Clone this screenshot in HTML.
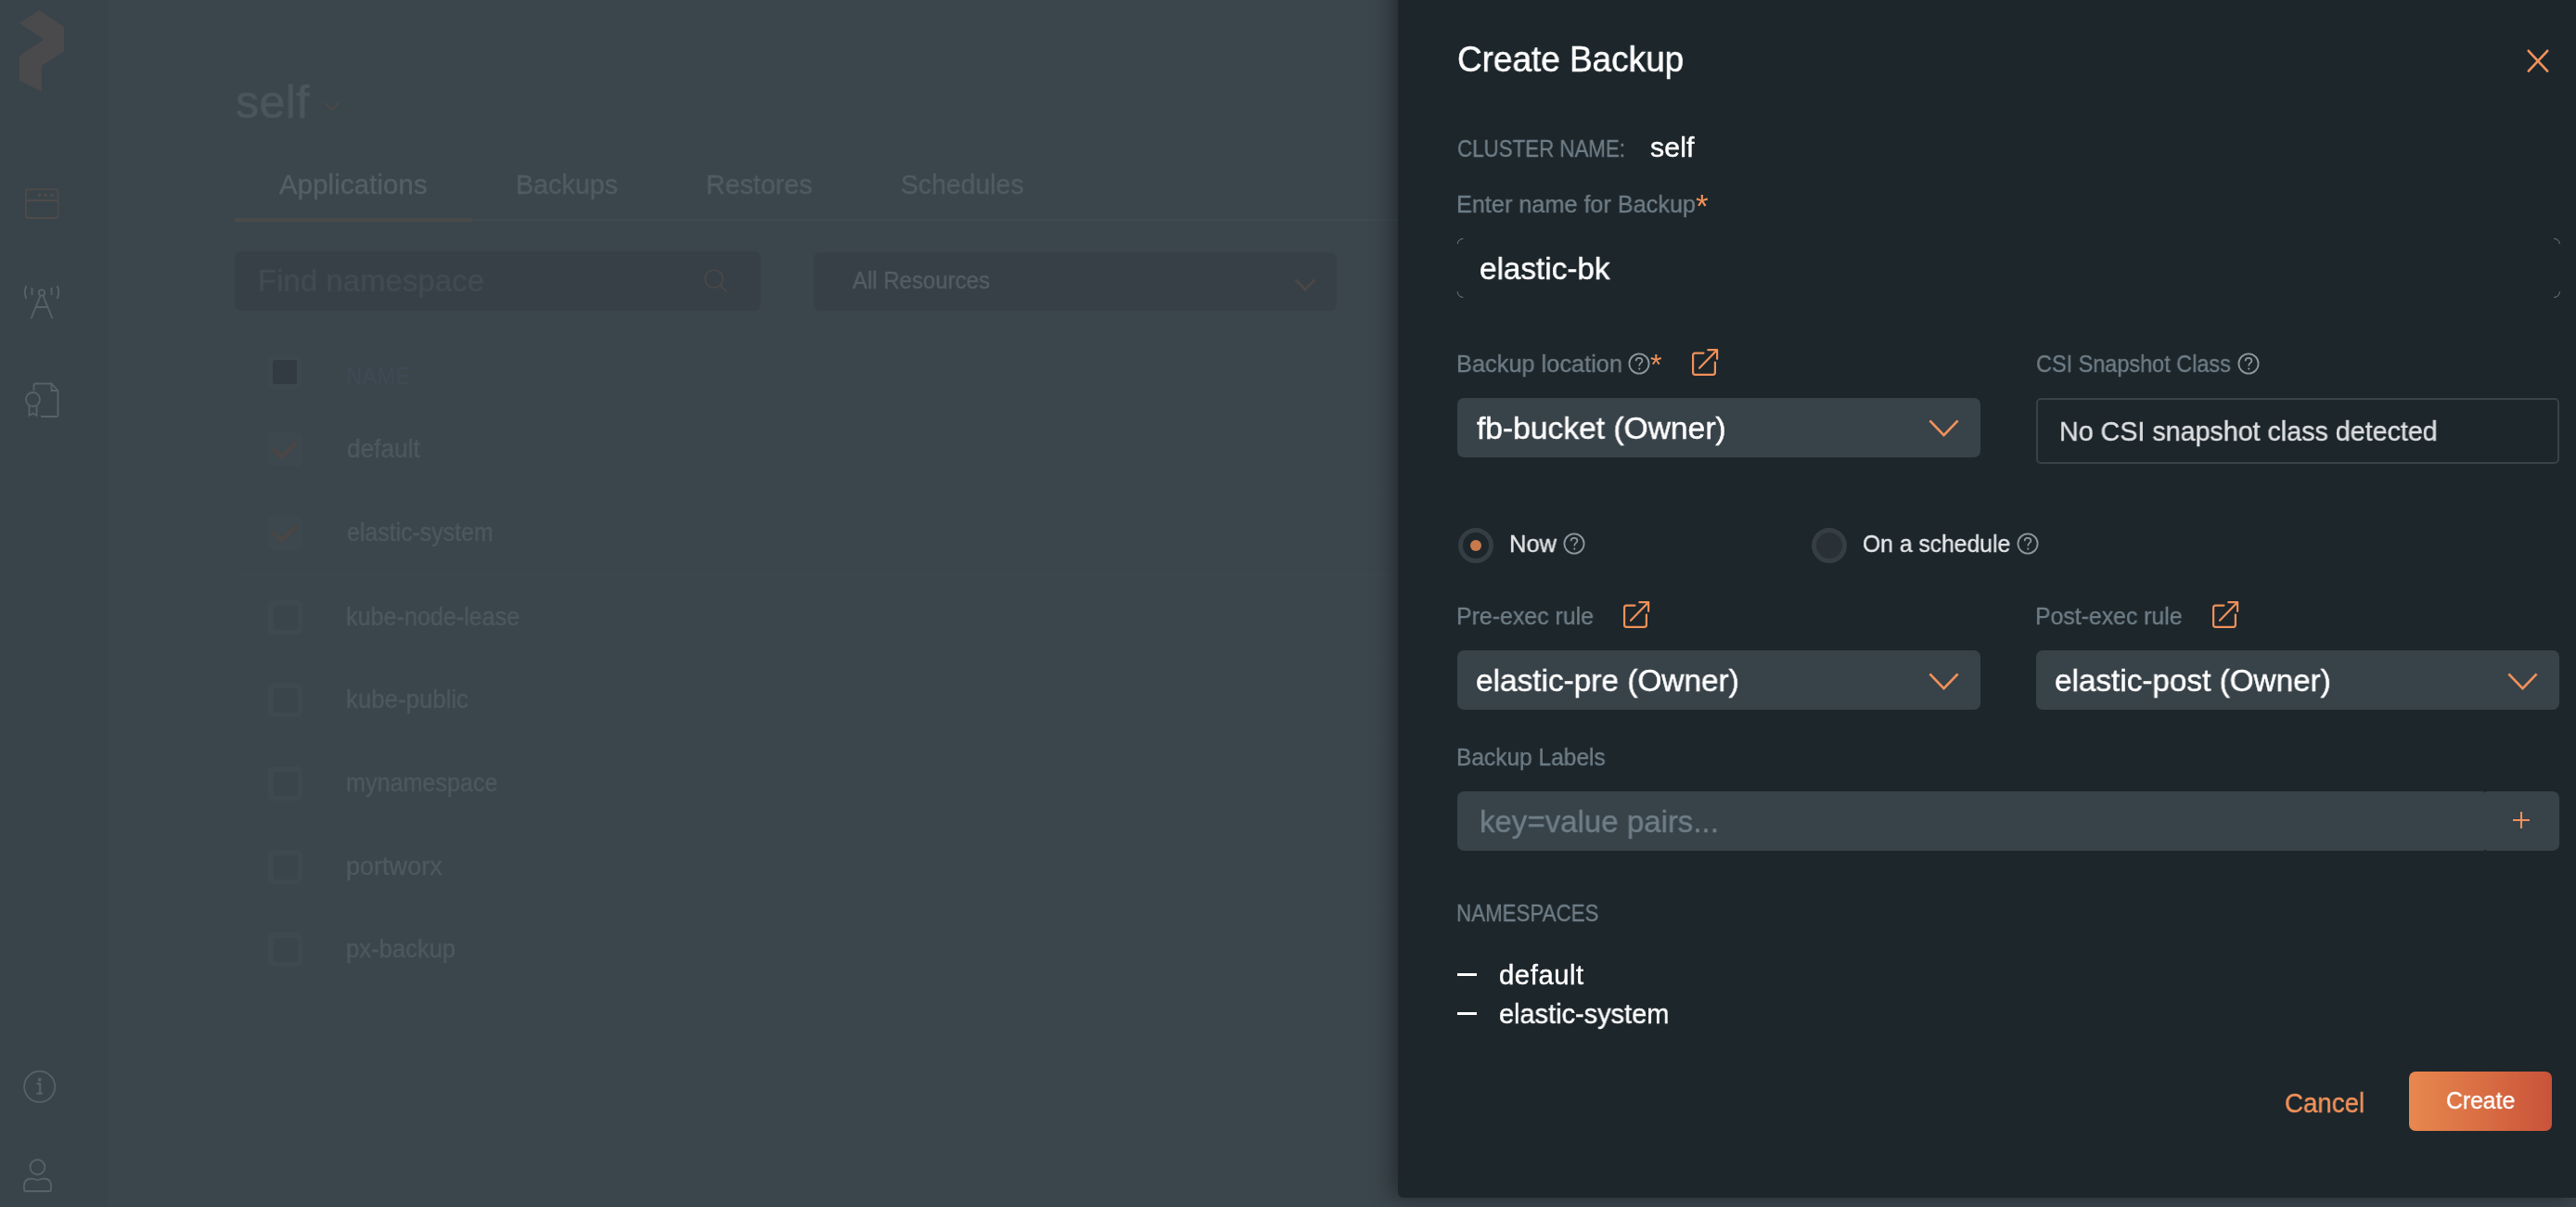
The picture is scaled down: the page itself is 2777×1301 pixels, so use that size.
<!DOCTYPE html>
<html><head><meta charset="utf-8"><style>
html,body{margin:0;padding:0;width:2777px;height:1301px;overflow:hidden;background:#3b464c;}
body{position:relative;font-family:"Liberation Sans", sans-serif;}
.a{position:absolute;box-sizing:content-box}
svg.a{overflow:visible}
.t{position:absolute;white-space:nowrap;line-height:0;will-change:transform;font-family:"Liberation Sans", sans-serif;}
.cb{width:37px;height:37px;background:#3e484f;border-radius:5px}
.cbf{width:37px;height:37px;background:#3d474e;border-radius:5px}
.cbi{width:26px;height:26px;background:#3a454b;border-radius:3px}
.dd{background:#384249;border-radius:7px}
</style></head><body>
<div class="a" style="left:0;top:0;width:117px;height:1301px;background:#39434a"></div>
<svg class="a" style="left:0;top:0" width="117" height="110" viewBox="0 0 117 110"><polygon points="42,11 69,29 69,55.5 44.7,71 44.7,98.5 21,87 21,60 47.4,42.5 21,25" fill="#4a4a4c"/></svg>
<svg class="a" style="left:20px;top:195px" width="50" height="50" viewBox="0 0 50 50"><rect x="7.8" y="9.2" width="34.8" height="30.8" rx="2.5" fill="none" stroke="#4e4a4a" stroke-width="1.8"/><line x1="7.8" y1="21" x2="42.6" y2="21" stroke="#4e4a4a" stroke-width="1.8"/><circle cx="22.5" cy="15.2" r="2" fill="#4e4a4a"/><circle cx="29.2" cy="15.2" r="2" fill="#4e4a4a"/><circle cx="36" cy="15.2" r="2" fill="#4e4a4a"/></svg>
<svg class="a" style="left:20px;top:300px" width="50" height="50" viewBox="0 0 50 50"><circle cx="25" cy="15.5" r="3.2" fill="none" stroke="#56626a" stroke-width="1.8"/><path d="M23.6 18.6 L13.5 43.5 M26.4 18.6 L36.5 43.5 M17.8 31 H32.2" fill="none" stroke="#56626a" stroke-width="1.8"/><path d="M8.5 8 Q5 15 8.5 22 M41.5 8 Q45 15 41.5 22" fill="none" stroke="#56626a" stroke-width="1.8"/><path d="M14.5 10 V18 M35.5 10 V18" fill="none" stroke="#56626a" stroke-width="1.8"/></svg>
<svg class="a" style="left:20px;top:405px" width="50" height="50" viewBox="0 0 50 50"><path d="M16.5 16 V10.5 Q16.5 8.5 18.5 8.5 H35.5 L42.5 16 V42.5 Q42.5 44 41 44 H24" fill="none" stroke="#56626a" stroke-width="1.8"/><path d="M35.5 8.5 V16 H42.5" fill="none" stroke="#56626a" stroke-width="1.8"/><circle cx="15.5" cy="25.5" r="7.5" fill="none" stroke="#56626a" stroke-width="1.8"/><path d="M11.5 32 V43 L15.5 40.5 L19.5 43 V32" fill="none" stroke="#56626a" stroke-width="1.8"/></svg>
<svg class="a" style="left:18px;top:1146px" width="50" height="50" viewBox="0 0 50 50"><circle cx="24.7" cy="25.3" r="16.6" fill="none" stroke="#56626a" stroke-width="1.7"/><circle cx="24.7" cy="17.7" r="2" fill="#56626a"/><path d="M21.7 22.2 H25.2 V32.3 M21.5 32.6 H28" fill="none" stroke="#56626a" stroke-width="2.2"/></svg>
<svg class="a" style="left:15px;top:1240px" width="50" height="50" viewBox="0 0 50 50"><circle cx="25.4" cy="18" r="8" fill="none" stroke="#56626a" stroke-width="1.8"/><path d="M11 42 V38 Q11 30.5 18.5 30.5 Q21 30.5 25.4 32 Q29.8 30.5 32.3 30.5 Q40 30.5 40 38 V42 Q40 44 38 44 H13 Q11 44 11 42 Z" fill="none" stroke="#56626a" stroke-width="1.8" stroke-linejoin="round"/></svg>
<svg class="a" style="left:346px;top:106.5px" width="23" height="15" viewBox="-3 -3 23 15"><path d="M0.8 0.8 L8.5 8.2 L16.2 0.8" fill="none" stroke="#4f4a48" stroke-width="1.6"/></svg>
<div class="a" style="left:253px;top:235px;width:256px;height:4px;background:#4a4a4b"></div>
<div class="a" style="left:509px;top:236px;width:1000px;height:2px;background:#3e4950"></div>
<div class="a" style="left:253px;top:271px;width:567px;height:64px;background:#374047;border-radius:7px"></div>
<svg class="a" style="left:755px;top:286px" width="32" height="32" viewBox="0 0 32 32"><circle cx="14.7" cy="14.7" r="9.5" fill="none" stroke="#4a4747" stroke-width="1.8"/><path d="M21.5 21.5 L28 28" stroke="#4a4747" stroke-width="1.8"/></svg>
<div class="a" style="left:877px;top:272px;width:564px;height:63px;background:#374047;border-radius:7px"></div>
<svg class="a" style="left:1392px;top:297px" width="30" height="19.5" viewBox="-3 -3 30 19.5"><path d="M1.5 1.5 L12.0 12.0 L22.5 1.5" fill="none" stroke="#4b4746" stroke-width="3"/></svg>
<div class="a" style="left:254px;top:440px;width:1260px;height:630px;border-left:2px solid #3b464c"></div>
<div class="a" style="left:256px;top:439px;width:1250px;height:2px;background:#3c474d"></div>
<div class="a" style="left:256px;top:529px;width:1250px;height:2px;background:#3c474d"></div>
<div class="a" style="left:256px;top:619px;width:1250px;height:2px;background:#3c474d"></div>
<div class="a" style="left:256px;top:709px;width:1250px;height:2px;background:#3c474d"></div>
<div class="a" style="left:256px;top:799px;width:1250px;height:2px;background:#3c474d"></div>
<div class="a" style="left:256px;top:889px;width:1250px;height:2px;background:#3c474d"></div>
<div class="a" style="left:256px;top:979px;width:1250px;height:2px;background:#3c474d"></div>
<div class="a" style="left:256px;top:1068px;width:1250px;height:2px;background:#3c474d"></div>
<div class="a" style="left:289px;top:383px;width:36px;height:36px;background:#3c474e;border-radius:5px"></div>
<div class="a" style="left:294px;top:388px;width:26px;height:26px;background:#323b42;border-radius:3px"></div>
<div class="a cbf" style="left:289px;top:466px"></div><svg class="a" style="left:289px;top:466px" width="36" height="36" viewBox="0 0 36 36"><path d="M5.5 18 L14.5 26.5 L30.5 11" fill="none" stroke="#4b4644" stroke-width="4.4"/></svg>
<div class="a cbf" style="left:289px;top:556px"></div><svg class="a" style="left:289px;top:556px" width="36" height="36" viewBox="0 0 36 36"><path d="M5.5 18 L14.5 26.5 L30.5 11" fill="none" stroke="#4b4644" stroke-width="4.4"/></svg>
<div class="a cb" style="left:289px;top:647px"></div><div class="a cbi" style="left:294.5px;top:652.5px"></div>
<div class="a cb" style="left:289px;top:736px"></div><div class="a cbi" style="left:294.5px;top:741.5px"></div>
<div class="a cb" style="left:289px;top:826px"></div><div class="a cbi" style="left:294.5px;top:831.5px"></div>
<div class="a cb" style="left:289px;top:916px"></div><div class="a cbi" style="left:294.5px;top:921.5px"></div>
<div class="a cb" style="left:289px;top:1005px"></div><div class="a cbi" style="left:294.5px;top:1010.5px"></div>
<div class="a" style="left:1507px;top:-60px;width:1270px;height:1351px;background:#1d262b;border-bottom-left-radius:6px;box-shadow:-6px 0 22px rgba(20,24,30,0.55)"></div>
<svg class="a" style="left:2720px;top:50px" width="32" height="32" viewBox="0 0 32 32"><path d="M5.8 4.8 L26.2 26.6 M26.2 4.8 L5.8 26.6" stroke="#f0915a" stroke-width="2.7" stroke-linecap="round"/></svg>
<svg class="a" style="left:1570px;top:256px" width="1191" height="66" viewBox="0 0 1191 66"><path d="M1.3 6.8 A5.8 5.8 0 0 1 7.3 1.3 M1.3 58.4 A5.8 5.8 0 0 0 7.3 64.4 M1183.3 1.3 A5.8 5.8 0 0 1 1189.3 6.8 M1189.3 58.4 A5.8 5.8 0 0 1 1183.3 64.4" fill="none" stroke="#737e85" stroke-width="1"/></svg>
<svg class="a" style="left:1753.5px;top:379px" width="26" height="26" viewBox="0 0 26 26"><circle cx="13" cy="13" r="10.6" fill="none" stroke="#8c989f" stroke-width="1.8"/><path d="M9.6 10.2 C9.6 8 11.2 6.9 13 6.9 C14.9 6.9 16.4 8.1 16.4 9.9 C16.4 12 13.3 12.3 13.3 14.8 L13.3 15.6" fill="none" stroke="#8c989f" stroke-width="1.7"/><circle cx="13.3" cy="18.6" r="1.1" fill="#8c989f"/></svg>
<div class="t" style="left:1828.44px;top:221.96px;font-size:35.01px;color:#f0915a">*</div>
<div class="t" style="left:1779.48px;top:393.00px;font-size:32.21px;color:#f0915a">*</div>
<svg class="a" style="left:1823px;top:375px" width="31" height="31" viewBox="-1 -1 31 31"><path d="M12.5 4.6 H3.4 Q1.1 4.6 1.1 6.9 V25.6 Q1.1 27.9 3.4 27.9 H22.6 Q24.9 27.9 24.9 25.6 V14.5" fill="none" stroke="#f0915a" stroke-width="2.2" stroke-linecap="round"/><path d="M8 20.8 L27 1.3" fill="none" stroke="#f0915a" stroke-width="2.2" stroke-linecap="round"/><path d="M17.3 1.2 H27.1 V10.8" fill="none" stroke="#f0915a" stroke-width="2.2" stroke-linecap="round" stroke-linejoin="round"/></svg>
<div class="a dd" style="left:1571px;top:429px;width:564px;height:64px"></div>
<svg class="a" style="left:2075.5px;top:449px" width="39" height="24.5" viewBox="-3 -3 39 24.5"><path d="M1.4 1.4 L16.5 17.1 L31.6 1.4" fill="none" stroke="#f0915a" stroke-width="2.8"/></svg>
<div class="a" style="left:2195px;top:429px;width:560px;height:67px;border:2px solid #384249;border-radius:5px"></div>
<svg class="a" style="left:2410.5px;top:379px" width="26" height="26" viewBox="0 0 26 26"><circle cx="13" cy="13" r="10.6" fill="none" stroke="#8c989f" stroke-width="1.8"/><path d="M9.6 10.2 C9.6 8 11.2 6.9 13 6.9 C14.9 6.9 16.4 8.1 16.4 9.9 C16.4 12 13.3 12.3 13.3 14.8 L13.3 15.6" fill="none" stroke="#8c989f" stroke-width="1.7"/><circle cx="13.3" cy="18.6" r="1.1" fill="#8c989f"/></svg>
<div class="a" style="left:1572px;top:569px;width:28px;height:28px;border:5px solid #353e45;border-radius:50%"></div>
<div class="a" style="left:1585px;top:582px;width:12.4px;height:12.4px;background:#c97a4c;border-radius:50%"></div>
<div class="a" style="left:1953px;top:569px;width:28px;height:28px;border:5px solid #353e45;background:#293137;border-radius:50%"></div>
<svg class="a" style="left:1683.5px;top:573px" width="26" height="26" viewBox="0 0 26 26"><circle cx="13" cy="13" r="10.6" fill="none" stroke="#8c989f" stroke-width="1.8"/><path d="M9.6 10.2 C9.6 8 11.2 6.9 13 6.9 C14.9 6.9 16.4 8.1 16.4 9.9 C16.4 12 13.3 12.3 13.3 14.8 L13.3 15.6" fill="none" stroke="#8c989f" stroke-width="1.7"/><circle cx="13.3" cy="18.6" r="1.1" fill="#8c989f"/></svg>
<svg class="a" style="left:2173px;top:573px" width="26" height="26" viewBox="0 0 26 26"><circle cx="13" cy="13" r="10.6" fill="none" stroke="#8c989f" stroke-width="1.8"/><path d="M9.6 10.2 C9.6 8 11.2 6.9 13 6.9 C14.9 6.9 16.4 8.1 16.4 9.9 C16.4 12 13.3 12.3 13.3 14.8 L13.3 15.6" fill="none" stroke="#8c989f" stroke-width="1.7"/><circle cx="13.3" cy="18.6" r="1.1" fill="#8c989f"/></svg>
<svg class="a" style="left:1749px;top:647px" width="31" height="31" viewBox="-1 -1 31 31"><path d="M12.5 4.6 H3.4 Q1.1 4.6 1.1 6.9 V25.6 Q1.1 27.9 3.4 27.9 H22.6 Q24.9 27.9 24.9 25.6 V14.5" fill="none" stroke="#f0915a" stroke-width="2.2" stroke-linecap="round"/><path d="M8 20.8 L27 1.3" fill="none" stroke="#f0915a" stroke-width="2.2" stroke-linecap="round"/><path d="M17.3 1.2 H27.1 V10.8" fill="none" stroke="#f0915a" stroke-width="2.2" stroke-linecap="round" stroke-linejoin="round"/></svg>
<svg class="a" style="left:2384px;top:647px" width="31" height="31" viewBox="-1 -1 31 31"><path d="M12.5 4.6 H3.4 Q1.1 4.6 1.1 6.9 V25.6 Q1.1 27.9 3.4 27.9 H22.6 Q24.9 27.9 24.9 25.6 V14.5" fill="none" stroke="#f0915a" stroke-width="2.2" stroke-linecap="round"/><path d="M8 20.8 L27 1.3" fill="none" stroke="#f0915a" stroke-width="2.2" stroke-linecap="round"/><path d="M17.3 1.2 H27.1 V10.8" fill="none" stroke="#f0915a" stroke-width="2.2" stroke-linecap="round" stroke-linejoin="round"/></svg>
<div class="a dd" style="left:1571px;top:701px;width:564px;height:64px"></div>
<svg class="a" style="left:2075.5px;top:721.5px" width="39" height="24.5" viewBox="-3 -3 39 24.5"><path d="M1.4 1.4 L16.5 17.1 L31.6 1.4" fill="none" stroke="#f0915a" stroke-width="2.8"/></svg>
<div class="a dd" style="left:2195px;top:701px;width:564px;height:64px"></div>
<svg class="a" style="left:2699.5px;top:721.5px" width="39" height="24.5" viewBox="-3 -3 39 24.5"><path d="M1.4 1.4 L16.5 17.1 L31.6 1.4" fill="none" stroke="#f0915a" stroke-width="2.8"/></svg>
<div class="a dd" style="left:1571px;top:853px;width:1108px;height:64px;border-radius:7px 2px 2px 7px"></div>
<div class="a dd" style="left:2679px;top:853px;width:80px;height:64px;border-radius:2px 7px 7px 2px"></div>
<svg class="a" style="left:2706px;top:872px" width="24" height="24" viewBox="0 0 24 24"><path d="M12 3 V21 M3 12 H21" stroke="#f0915a" stroke-width="2.1"/></svg>
<div class="a" style="left:1571px;top:1049px;width:21px;height:3px;background:#fff"></div>
<div class="a" style="left:1571px;top:1091px;width:21px;height:3px;background:#fff"></div>
<div class="a" style="left:2597px;top:1155px;width:154px;height:64px;border-radius:7px;background:linear-gradient(90deg,#e8884f,#d96e43 50%,#c9533a)"></div>
<div class="t" style="left:253.62px;top:109.50px;font-size:50.22px;letter-spacing:0.352px;color:#4a555c;-webkit-text-stroke:0.70px #4a555c;">self</div>
<div class="t" style="left:301.00px;top:198.54px;font-size:29.31px;letter-spacing:0.150px;color:#535e66;-webkit-text-stroke:0.41px #535e66;">Applications</div>
<div class="t" style="left:555.76px;top:198.84px;font-size:29.31px;transform:scaleX(0.9796);transform-origin:0 0;color:#505b63;-webkit-text-stroke:0.41px #505b63;">Backups</div>
<div class="t" style="left:760.76px;top:198.84px;font-size:29.31px;transform:scaleX(0.9790);transform-origin:0 0;color:#505b63;-webkit-text-stroke:0.41px #505b63;">Restores</div>
<div class="t" style="left:971.11px;top:198.84px;font-size:29.31px;transform:scaleX(0.9699);transform-origin:0 0;color:#505b63;-webkit-text-stroke:0.41px #505b63;">Schedules</div>
<div class="t" style="left:278.24px;top:303.43px;font-size:32.80px;letter-spacing:0.108px;color:#404b52;-webkit-text-stroke:0.46px #404b52;">Find namespace</div>
<div class="t" style="left:919.40px;top:302.05px;font-size:25.83px;transform:scaleX(0.9291);transform-origin:0 0;color:#535e65;-webkit-text-stroke:0.36px #535e65;">All Resources</div>
<div class="t" style="left:373.43px;top:404.80px;font-size:25.11px;transform:scaleX(0.9534);transform-origin:0 0;color:#3f4b55;-webkit-text-stroke:0.35px #3f4b55;">NAME</div>
<div class="t" style="left:374.18px;top:484.36px;font-size:26.96px;transform:scaleX(0.9727);transform-origin:0 0;color:#4d585f;-webkit-text-stroke:0.38px #4d585f;">default</div>
<div class="t" style="left:374.22px;top:574.06px;font-size:26.96px;transform:scaleX(0.9239);transform-origin:0 0;color:#4d585f;-webkit-text-stroke:0.38px #4d585f;">elastic-system</div>
<div class="t" style="left:373.43px;top:665.16px;font-size:26.96px;transform:scaleX(0.9326);transform-origin:0 0;color:#4d585f;-webkit-text-stroke:0.38px #4d585f;">kube-node-lease</div>
<div class="t" style="left:373.39px;top:754.26px;font-size:26.96px;transform:scaleX(0.9576);transform-origin:0 0;color:#4d585f;-webkit-text-stroke:0.38px #4d585f;">kube-public</div>
<div class="t" style="left:373.43px;top:844.06px;font-size:26.96px;transform:scaleX(0.9332);transform-origin:0 0;color:#4d585f;-webkit-text-stroke:0.38px #4d585f;">mynamespace</div>
<div class="t" style="left:373.32px;top:934.36px;font-size:26.96px;letter-spacing:0.045px;color:#4d585f;-webkit-text-stroke:0.38px #4d585f;">portworx</div>
<div class="t" style="left:373.40px;top:1023.36px;font-size:26.96px;transform:scaleX(0.9498);transform-origin:0 0;color:#4d585f;-webkit-text-stroke:0.38px #4d585f;">px-backup</div>
<div class="t" style="left:1571.07px;top:63.98px;font-size:38.44px;transform:scaleX(0.9606);transform-origin:0 0;color:#ffffff;-webkit-text-stroke:0.54px #ffffff;">Create Backup</div>
<div class="t" style="left:1570.95px;top:160.05px;font-size:25.83px;transform:scaleX(0.8641);transform-origin:0 0;color:#6e7d86;-webkit-text-stroke:0.36px #6e7d86;">CLUSTER NAME:</div>
<div class="t" style="left:1778.53px;top:158.72px;font-size:30.24px;letter-spacing:0.105px;color:#ffffff;-webkit-text-stroke:0.42px #ffffff;">self</div>
<div class="t" style="left:1570.03px;top:220.05px;font-size:25.83px;transform:scaleX(0.9766);transform-origin:0 0;color:#6e7d86;-webkit-text-stroke:0.36px #6e7d86;">Enter name for Backup</div>
<div class="t" style="left:1594.96px;top:289.17px;font-size:34.13px;transform:scaleX(0.9747);transform-origin:0 0;color:#ffffff;-webkit-text-stroke:0.48px #ffffff;">elastic-bk</div>
<div class="t" style="left:1570.02px;top:392.05px;font-size:25.83px;transform:scaleX(0.9816);transform-origin:0 0;color:#6e7d86;-webkit-text-stroke:0.36px #6e7d86;">Backup location</div>
<div class="t" style="left:1592.00px;top:461.32px;font-size:33.72px;transform:scaleX(0.9958);transform-origin:0 0;color:#ffffff;-webkit-text-stroke:0.47px #ffffff;">fb-bucket (Owner)</div>
<div class="t" style="left:2194.90px;top:392.05px;font-size:25.83px;transform:scaleX(0.9078);transform-origin:0 0;color:#6e7d86;-webkit-text-stroke:0.36px #6e7d86;">CSI Snapshot Class</div>
<div class="t" style="left:2219.76px;top:464.74px;font-size:29.62px;transform:scaleX(0.9675);transform-origin:0 0;color:#dcdee0;-webkit-text-stroke:0.41px #dcdee0;">No CSI snapshot class detected</div>
<div class="t" style="left:1626.71px;top:586.05px;font-size:25.83px;transform:scaleX(0.9866);transform-origin:0 0;color:#e4e6e8;-webkit-text-stroke:0.36px #e4e6e8;">Now</div>
<div class="t" style="left:2008.44px;top:585.85px;font-size:25.83px;transform:scaleX(0.9555);transform-origin:0 0;color:#e4e6e8;-webkit-text-stroke:0.36px #e4e6e8;">On a schedule</div>
<div class="t" style="left:1570.06px;top:664.05px;font-size:25.83px;transform:scaleX(0.9632);transform-origin:0 0;color:#6e7d86;-webkit-text-stroke:0.36px #6e7d86;">Pre-exec rule</div>
<div class="t" style="left:1590.96px;top:733.32px;font-size:33.72px;transform:scaleX(0.9898);transform-origin:0 0;color:#ffffff;-webkit-text-stroke:0.47px #ffffff;">elastic-pre (Owner)</div>
<div class="t" style="left:2194.46px;top:664.05px;font-size:25.83px;transform:scaleX(0.9603);transform-origin:0 0;color:#6e7d86;-webkit-text-stroke:0.36px #6e7d86;">Post-exec rule</div>
<div class="t" style="left:2214.96px;top:733.32px;font-size:33.72px;transform:scaleX(0.9869);transform-origin:0 0;color:#ffffff;-webkit-text-stroke:0.47px #ffffff;">elastic-post (Owner)</div>
<div class="t" style="left:1570.09px;top:816.45px;font-size:25.83px;transform:scaleX(0.9483);transform-origin:0 0;color:#6e7d86;-webkit-text-stroke:0.36px #6e7d86;">Backup Labels</div>
<div class="t" style="left:1594.64px;top:885.32px;font-size:33.72px;transform:scaleX(0.9791);transform-origin:0 0;color:#6e7d86;-webkit-text-stroke:0.47px #6e7d86;">key=value pairs...</div>
<div class="t" style="left:1570.26px;top:984.30px;font-size:25.11px;transform:scaleX(0.8894);transform-origin:0 0;color:#6e7d86;-webkit-text-stroke:0.35px #6e7d86;">NAMESPACES</div>
<div class="t" style="left:1615.58px;top:1050.54px;font-size:29.31px;letter-spacing:0.550px;color:#ffffff;-webkit-text-stroke:0.41px #ffffff;">default</div>
<div class="t" style="left:1615.60px;top:1092.84px;font-size:29.31px;transform:scaleX(0.9877);transform-origin:0 0;color:#ffffff;-webkit-text-stroke:0.41px #ffffff;">elastic-system</div>
<div class="t" style="left:2462.70px;top:1188.81px;font-size:29.42px;transform:scaleX(0.9405);transform-origin:0 0;color:#f0915a;-webkit-text-stroke:0.41px #f0915a;">Cancel</div>
<div class="t" style="left:2636.84px;top:1186.05px;font-size:25.83px;transform:scaleX(0.9566);transform-origin:0 0;color:#ffffff;-webkit-text-stroke:0.36px #ffffff;">Create</div>
</body></html>
